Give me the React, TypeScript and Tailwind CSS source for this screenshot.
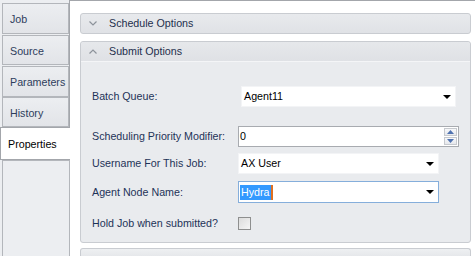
import React from "react";

const Chevron = ({ up }: { up?: boolean }) => (
  <svg width="8" height="5" viewBox="0 0 8 5" className="block">
    {up ? (
      <polyline points="0.5,4.5 4,1 7.5,4.5" fill="none" stroke="#8d939b" strokeWidth="1.2" />
    ) : (
      <polyline points="0.5,0.5 4,4 7.5,0.5" fill="none" stroke="#8d939b" strokeWidth="1.2" />
    )}
  </svg>
);

const DownArrow = () => (
  <svg width="8" height="4" viewBox="0 0 8 4" className="block">
    <polygon points="0,0 8,0 4,4" fill="#000" />
  </svg>
);

const Tab = ({ label, h }: { label: string; h: string }) => (
  <div
    className={`${h} ml-[2px] border border-[#b3b6bb] bg-gradient-to-b from-[#eceef1] to-[#e2e4e8] flex items-center pl-[7px] pt-[2px] text-[#2e3d5c]`}
  >
    {label}
  </div>
);

export default function App() {
  return (
    <div
      className="w-[475px] h-[256px] flex bg-[#eceef1] overflow-hidden text-[10.7px] leading-none"
      style={{ fontFamily: '"Liberation Sans", Arial, sans-serif' }}
    >
      {/* Left tab strip */}
      <div className="w-[70px] shrink-0 flex flex-col border-r border-[#a3a6ab] pt-[3px] bg-[#eceef1]">
        <Tab label="Job" h="h-[31px]" />
        <div className="h-[1px]" />
        <Tab label="Source" h="h-[30px]" />
        <div className="h-[1px]" />
        <Tab label="Parameters" h="h-[31px]" />
        <Tab label="History" h="h-[30px]" />
        <div className="relative mr-[-1px] h-[33px] bg-white border-l border-t border-b border-[#a3a6ab] flex items-center pl-[7px] pt-[2px] text-black">
          Properties
        </div>
        <div className="flex-1 ml-[2px] mr-[-1px] border border-[#b3b6bb] border-b-0 bg-[#eceef1]" />
      </div>

      {/* Content */}
      <div className="flex-1 border-t border-[#a3a6ab] bg-white pl-[10px] pr-[4px] pt-[12px] flex flex-col">
        {/* Schedule Options */}
        <div className="h-[21px] rounded-[3px] border border-[#c9ccd1] bg-gradient-to-b from-[#e8eaed] to-[#e0e2e6] flex items-center text-[#1e2f4d]">
          <div className="w-[28px] flex justify-center pl-[1px] pr-[5px]">
            <Chevron />
          </div>
          <span>Schedule Options</span>
        </div>

        <div className="h-[7px]" />

        {/* Submit Options */}
        <div className="h-[202px] rounded-[3px] border border-[#c9ccd1] bg-[#e9ebee] flex flex-col">
          <div className="h-[20px] rounded-t-[3px] bg-gradient-to-b from-[#e6e8eb] to-[#dfe1e5] border-b border-[#f4f5f7] flex items-center text-[#1e2f4d]">
            <div className="w-[28px] flex justify-center pl-[1px] pr-[5px]">
              <Chevron up />
            </div>
            <span>Submit Options</span>
          </div>

          <div className="pl-[11px] pt-[24px] flex flex-col text-[#1e3358]">
            {/* Batch Queue */}
            <div className="flex items-center h-[21px]">
              <div className="w-[146px]">Batch Queue:</div>
              <div className="ml-[3px] w-[215px] h-[21px] bg-white border border-[#f3f4f6] flex items-center pl-[2px] pr-[4px] text-black">
                <span className="flex-1">Agent11</span>
                <DownArrow />
              </div>
            </div>

            {/* Scheduling Priority */}
            <div className="flex items-center h-[21px] mt-[19px]">
              <div className="w-[146px]">Scheduling Priority Modifier:</div>
              <div className="w-[221px] h-[21px] bg-white border border-[#a8abb0] flex items-center pl-[1px] pr-[1px] text-black">
                <span className="flex-1">0</span>
                <div className="flex flex-col gap-[1px]">
                  <div className="w-[13px] h-[8px] border border-[#c6c9ce] bg-gradient-to-b from-[#f7f8fa] to-[#e6e8ec] flex items-center justify-center">
                    <svg width="7" height="4" viewBox="0 0 7 4"><polygon points="0,4 7,4 3.5,0" fill="#4f72b0" /></svg>
                  </div>
                  <div className="w-[13px] h-[8px] border border-[#c6c9ce] bg-gradient-to-b from-[#f7f8fa] to-[#e6e8ec] flex items-center justify-center">
                    <svg width="7" height="4" viewBox="0 0 7 4"><polygon points="0,0 7,0 3.5,4" fill="#4f72b0" /></svg>
                  </div>
                </div>
              </div>
            </div>

            {/* Username */}
            <div className="flex items-center h-[21px] mt-[6px]">
              <div className="w-[146px]">Username For This Job:</div>
              <div className="w-[201px] h-[21px] bg-white border border-[#f3f4f6] flex items-center pl-[2px] pr-[4px] text-black">
                <span className="flex-1">AX User</span>
                <DownArrow />
              </div>
            </div>

            {/* Agent Node Name */}
            <div className="flex items-center h-[22px] mt-[7px]">
              <div className="w-[146px]">Agent Node Name:</div>
              <div className="w-[201px] h-[22px] bg-white border border-[#85aedb] flex items-center pl-[1px] pr-[4px] text-black">
                <span className="flex-1 flex items-center">
                  <span className="bg-[#3399ff] text-white px-[1px] h-[15px] flex items-center">Hydra</span>
                  <span className="w-[2px] h-[15px] bg-[#e07020]" />
                </span>
                <DownArrow />
              </div>
            </div>

            {/* Hold Job */}
            <div className="flex items-center h-[13px] mt-[14px]">
              <div className="w-[146px]">Hold Job when submitted?</div>
              <div className="w-[13px] h-[13px] border border-[#8e8f8f] bg-gradient-to-br from-[#dcdcdc] to-[#f6f6f6]" />
            </div>
          </div>
        </div>

        <div className="h-[5px]" />

        {/* Next panel (partially visible) */}
        <div className="flex-1 rounded-t-[3px] border border-b-0 border-[#c9ccd1] bg-gradient-to-b from-[#eef0f2] to-[#e6e8eb]" />
      </div>
    </div>
  );
}
